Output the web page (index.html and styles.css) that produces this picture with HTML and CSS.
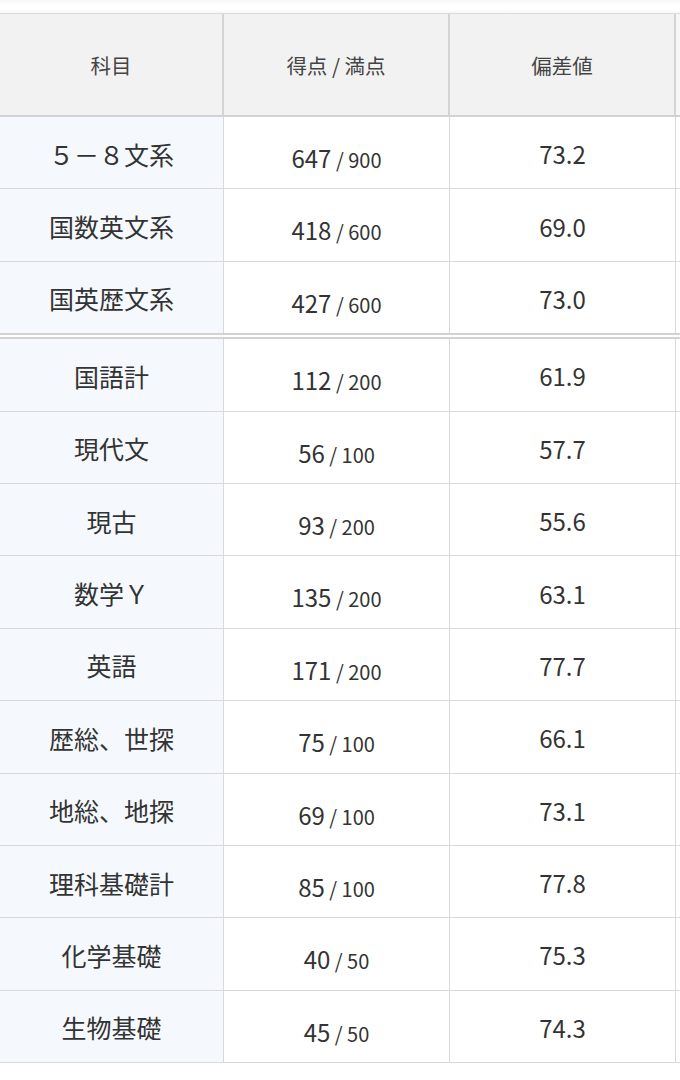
FILE: index.html
```html
<!DOCTYPE html>
<html lang="ja">
<head>
<meta charset="utf-8">
<link rel="stylesheet" href="styles.css">
</head>
<body>
<div class="top"></div>
<div class="table">
  <div class="row head">
    <div class="cell">科目</div>
    <div class="cell">得点 / 満点</div>
    <div class="cell">偏差値</div>
    <div class="cell extra"></div>
  </div>
  <div class="row"><div class="cell subj">５－８文系</div><div class="cell score"><span class="num">647</span><span class="max"> / 900</span></div><div class="cell val">73.2</div><div class="cell extra"></div></div>
  <div class="row"><div class="cell subj">国数英文系</div><div class="cell score"><span class="num">418</span><span class="max"> / 600</span></div><div class="cell val">69.0</div><div class="cell extra"></div></div>
  <div class="row group-end"><div class="cell subj">国英歴文系</div><div class="cell score"><span class="num">427</span><span class="max"> / 600</span></div><div class="cell val">73.0</div><div class="cell extra"></div></div>
  <div class="row"><div class="cell subj">国語計</div><div class="cell score"><span class="num">112</span><span class="max"> / 200</span></div><div class="cell val">61.9</div><div class="cell extra"></div></div>
  <div class="row"><div class="cell subj">現代文</div><div class="cell score"><span class="num">56</span><span class="max"> / 100</span></div><div class="cell val">57.7</div><div class="cell extra"></div></div>
  <div class="row"><div class="cell subj">現古</div><div class="cell score"><span class="num">93</span><span class="max"> / 200</span></div><div class="cell val">55.6</div><div class="cell extra"></div></div>
  <div class="row"><div class="cell subj">数学Ｙ</div><div class="cell score"><span class="num">135</span><span class="max"> / 200</span></div><div class="cell val">63.1</div><div class="cell extra"></div></div>
  <div class="row"><div class="cell subj">英語</div><div class="cell score"><span class="num">171</span><span class="max"> / 200</span></div><div class="cell val">77.7</div><div class="cell extra"></div></div>
  <div class="row"><div class="cell subj">歴総、世探</div><div class="cell score"><span class="num">75</span><span class="max"> / 100</span></div><div class="cell val">66.1</div><div class="cell extra"></div></div>
  <div class="row"><div class="cell subj">地総、地探</div><div class="cell score"><span class="num">69</span><span class="max"> / 100</span></div><div class="cell val">73.1</div><div class="cell extra"></div></div>
  <div class="row"><div class="cell subj">理科基礎計</div><div class="cell score"><span class="num">85</span><span class="max"> / 100</span></div><div class="cell val">77.8</div><div class="cell extra"></div></div>
  <div class="row"><div class="cell subj">化学基礎</div><div class="cell score"><span class="num">40</span><span class="max"> / 50</span></div><div class="cell val">75.3</div><div class="cell extra"></div></div>
  <div class="row"><div class="cell subj">生物基礎</div><div class="cell score"><span class="num">45</span><span class="max"> / 50</span></div><div class="cell val">74.3</div><div class="cell extra"></div></div>
</div>
</body>
</html>
```
FILE: styles.css
```css
html, body {
  margin: 0;
  padding: 0;
  background: #fff;
  overflow: hidden;
}
body {
  font-family: "Noto Sans CJK JP", "Noto Sans", sans-serif;
  color: #333;
}
.top {
  height: 13px;
  background: linear-gradient(#f7f7f7, #ffffff 40%, #ffffff 75%, #f6f6f6);
}
.table {
  width: 700px;
  border-top: 1px solid #dcdcdc;
}
.row {
  display: grid;
  grid-template-columns: 224px 226px 226px 1fr;
  height: 72.4px;
  box-sizing: border-box;
  border-bottom: 1px solid #d9d9d9;
}
.row.head {
  height: 103px;
  border-bottom: 2px solid #d2d2d2;
  background: #f2f2f2;
}
.row.group-end {
  height: 77.4px;
  border-bottom: 6px double #d2d2d2;
}
.cell {
  box-sizing: border-box;
  border-right: 1px solid #d9d9d9;
  display: flex;
  align-items: center;
  justify-content: center;
  font-size: 24px;
  line-height: 1;
  padding-top: 4px;
}
.head .cell {
  border-right: 2px solid #d4d4d4;
  font-size: 20.5px;
  color: #444;
  padding-top: 2px;
}
.head .cell.extra {
  background: #f7f7f7;
}
.cell.extra {
  border-right: none;
}
.subj {
  background: #f5f9fd;
  font-size: 25px;
  padding-top: 3px;
}
.score {
  align-items: baseline;
  padding-top: 29px;
}
.score .num {
  font-size: 24px;
}
.score .max {
  font-size: 20px;
  white-space: pre;
}
.val {
  font-size: 24px;
  padding-top: 3px;
}
```
